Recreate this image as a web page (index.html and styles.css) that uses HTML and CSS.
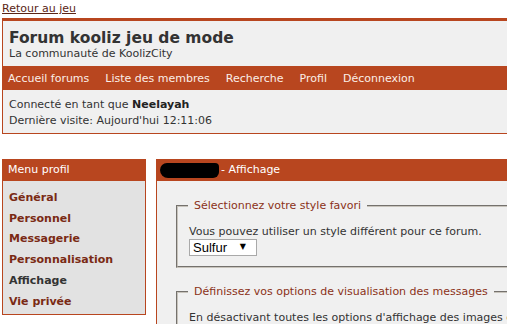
FILE: index.html
```
<!DOCTYPE html>
<html lang="fr">
<head>
<meta charset="utf-8">
<title>Forum kooliz jeu de mode</title>
<link rel="stylesheet" href="styles.css">
</head>
<body>
<div class="page">
  <a class="back" href="#">Retour au jeu</a>
  <header class="header">
    <div class="brand">
      <h1 class="title">Forum kooliz jeu de mode</h1>
      <div class="subtitle">La communauté de KoolizCity</div>
    </div>
    <nav class="nav">
      <a href="#">Accueil forums</a>
      <a href="#">Liste des membres</a>
      <a href="#">Recherche</a>
      <a href="#">Profil</a>
      <a href="#">Déconnexion</a>
    </nav>
    <div class="info">
      <div>Connecté en tant que <b>Neelayah</b></div>
      <div>Dernière visite: Aujourd'hui 12:11:06</div>
    </div>
  </header>
  <div class="main">
    <aside class="menu">
      <div class="menu-head">Menu profil</div>
      <ul class="menu-list">
        <li><a href="#">Général</a></li>
        <li><a href="#">Personnel</a></li>
        <li><a href="#">Messagerie</a></li>
        <li><a href="#">Personnalisation</a></li>
        <li class="current">Affichage</li>
        <li><a href="#">Vie privée</a></li>
      </ul>
    </aside>
    <section class="panel">
      <div class="panel-head"><span class="redact"></span>- Affichage</div>
      <div class="panel-body">
        <fieldset class="group">
          <legend>Sélectionnez votre style favori</legend>
          <div class="text">Vous pouvez utiliser un style différent pour ce forum.</div>
          <span class="select"><select><option>Sulfur</option></select></span>
        </fieldset>
        <fieldset class="group">
          <legend>Définissez vos options de visualisation des messages</legend>
          <div class="text">En désactivant toutes les options d'affichage des images et des smileys, le forum sera plus rapide.</div>
        </fieldset>
      </div>
    </section>
  </div>
</div>
</body>
</html>
```
FILE: styles.css
```
html, body {
  margin: 0;
  padding: 0;
  overflow: hidden;
  background: #ffffff;
}
body {
  font-family: "DejaVu Sans", Verdana, sans-serif;
  font-size: 11px;
  color: #333333;
}
.page {
  width: 820px;
  padding: 0 2px;
}
.back {
  display: block;
  height: 18px;
  line-height: 18px;
  color: #5a2414;
  font-size: 11px;
}
.header {
  background: #f0f0f0;
  border: 1px solid #b8461f;
  border-top-width: 3px;
}
.brand {
  padding: 8px 6px 6px;
}
.title {
  margin: 0;
  font-size: 15.5px;
  line-height: 19px;
  font-weight: bold;
  color: #333333;
}
.subtitle {
  font-size: 11px;
  line-height: 12px;
}
.nav {
  display: flex;
  gap: 16px;
  background: #b8461f;
  height: 24px;
  align-items: center;
  padding: 0 6px;
  margin: 0 -1px;
}
.nav a {
  color: #fbeee8;
  text-decoration: none;
  font-size: 11px;
}
.info {
  padding: 7px 6px 4px;
  line-height: 16px;
}
.info b {
  color: #222;
}
.main {
  display: flex;
  align-items: flex-start;
  gap: 10px;
  margin-top: 25px;
}
.menu {
  width: 142px;
  background: #e2e2e2;
  border: 1px solid #b8461f;
  border-top: 0;
}
.menu-head, .panel-head {
  background: #b8461f;
  color: #ffffff;
  height: 22px;
  line-height: 22px;
  padding: 0 6px;
  font-size: 11px;
  margin: 0 -1px;
}
.menu-list {
  list-style: none;
  margin: 0;
  padding: 7px 6px 2px;
  font-weight: bold;
  font-size: 11px;
}
.menu-list li {
  line-height: 20.7px;
}
.menu-list a {
  color: #7a2a14;
  text-decoration: none;
}
.menu-list .current {
  color: #333333;
}
.panel {
  flex: 1;
  background: #f0f0f0;
  border: 1px solid #b8461f;
  border-top: 0;
  min-height: 170px;
}
.panel-head {
  display: flex;
  align-items: center;
  padding-left: 4px;
}
.redact {
  display: inline-block;
  width: 59px;
  height: 15px;
  background: #000;
  border-radius: 7px 4px 6px 8px;
  margin-right: 2px;
}
.panel-body {
  padding: 18px 0 0 19px;
}
.group {
  margin: 0 0 17px;
  padding: 13px 11px 10px;
  border: 2px groove #c8c4bc;
  width: 600px;
}
.group legend {
  padding: 0 6px;
  margin-left: -1px;
  color: #8b3218;
  font-size: 11px;
}
.text {
  line-height: 14px;
  font-size: 11px;
}
.select {
  display: inline-block;
  position: relative;
  vertical-align: top;
}
.select select {
  appearance: none;
  -webkit-appearance: none;
  width: 68px;
  height: 17px;
  border: 1px solid #a9a9a9;
  border-radius: 0;
  background: #ffffff;
  font-family: "Liberation Sans", Arial, sans-serif;
  font-size: 13px;
  padding: 0 0 0 3px;
  color: #000;
  margin: 0;
}
.select::after {
  content: "▼";
  position: absolute;
  right: 11px;
  top: 3px;
  font-size: 8px;
  color: #000;
  pointer-events: none;
}
```
